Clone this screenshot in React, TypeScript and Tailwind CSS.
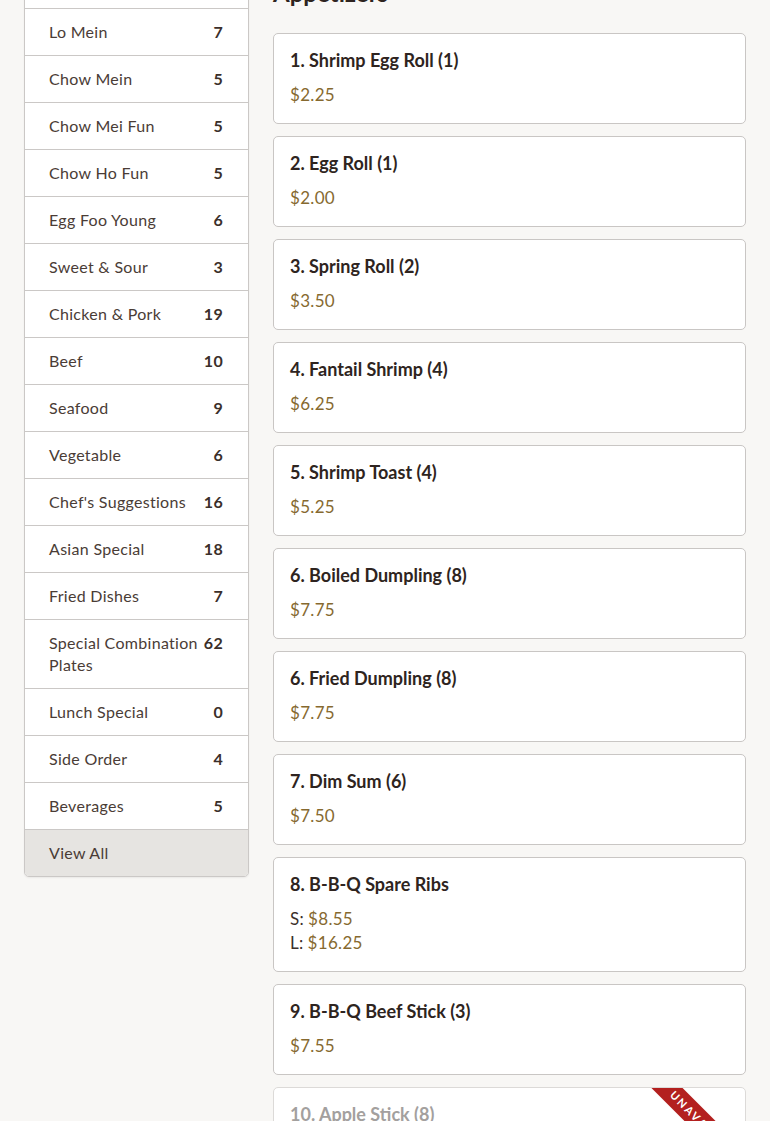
import React from "react";

const categories: [string, number][] = [
  ["Soup", 8],
  ["Fried Rice", 9],
  ["Lo Mein", 7],
  ["Chow Mein", 5],
  ["Chow Mei Fun", 5],
  ["Chow Ho Fun", 5],
  ["Egg Foo Young", 6],
  ["Sweet & Sour", 3],
  ["Chicken & Pork", 19],
  ["Beef", 10],
  ["Seafood", 9],
  ["Vegetable", 6],
  ["Chef's Suggestions", 16],
  ["Asian Special", 18],
  ["Fried Dishes", 7],
  ["Special Combination Plates", 62],
  ["Lunch Special", 0],
  ["Side Order", 4],
  ["Beverages", 5],
];

type Item = { name: string; prices: { label?: string; value: string }[]; unavailable?: boolean };

const items: Item[] = [
  { name: "1. Shrimp Egg Roll (1)", prices: [{ value: "$2.25" }] },
  { name: "2. Egg Roll (1)", prices: [{ value: "$2.00" }] },
  { name: "3. Spring Roll (2)", prices: [{ value: "$3.50" }] },
  { name: "4. Fantail Shrimp (4)", prices: [{ value: "$6.25" }] },
  { name: "5. Shrimp Toast (4)", prices: [{ value: "$5.25" }] },
  { name: "6. Boiled Dumpling (8)", prices: [{ value: "$7.75" }] },
  { name: "6. Fried Dumpling (8)", prices: [{ value: "$7.75" }] },
  { name: "7. Dim Sum (6)", prices: [{ value: "$7.50" }] },
  {
    name: "8. B-B-Q Spare Ribs",
    prices: [
      { label: "S:", value: "$8.55" },
      { label: "L:", value: "$16.25" },
    ],
  },
  { name: "9. B-B-Q Beef Stick (3)", prices: [{ value: "$7.55" }] },
  { name: "10. Apple Stick (8)", prices: [{ value: "$6.25" }], unavailable: true },
];

export default function App() {
  return (
    <div
      className="h-[1121px] overflow-hidden bg-[#f8f7f5] text-[#3b2f2a]"
      style={{ fontFamily: "Lato, 'Noto Sans', sans-serif" }}
    >
      <div className="flex items-start gap-6 px-6">
        <aside className="w-[225px] shrink-0 mt-[-86px] rounded-b-[5px] border border-[#cbc8c6] bg-white overflow-hidden shadow-[0_1px_2px_rgba(0,0,0,0.06)]">
          {categories.map(([name, count]) => (
            <div
              key={name}
              className="flex items-start justify-between gap-1 border-b border-[#cbc8c6] pl-6 pr-[25px] py-3 text-[16px] leading-[22px] tracking-[0.3px]"
            >
              <span className="text-[#4a3c36]">{name}</span>
              <span className="font-bold text-[#3b2f2a]">{count}</span>
            </div>
          ))}
          <div className="bg-[#e6e4e1] pl-6 py-3 text-[16px] leading-[22px] tracking-[0.3px] text-[#4a3c36]">View All</div>
        </aside>
        <main className="flex-1 mt-[-23px]">
          <h2 className="text-[24px] leading-[32px] font-bold text-[#2e2420] mb-6">Appetizers</h2>
          <div className="flex flex-col gap-3">
            {items.map((it) => (
              <div
                key={it.name}
                className={`relative overflow-hidden rounded-[5px] border bg-white pl-4 pr-4 pt-[13px] pb-[16px] ${
                  it.unavailable ? "border-[#dcdad8]" : "border-[#c9c6c4]"
                }`}
              >
                <div
                  className={`text-[18px] leading-[27px] font-bold ${
                    it.unavailable ? "text-[#a3a09e]" : "text-[#2e2420]"
                  }`}
                >
                  {it.name}
                </div>
                <div className="mt-[9px] flex flex-col">
                  {it.prices.map((p, i) => (
                    <div key={i} className="text-[17px] leading-[24px] tracking-[0.3px]">
                      {p.label && <span className="text-[#3b2f2a] mr-1">{p.label}</span>}
                      <span className={it.unavailable ? "text-[#b8a98a]" : "text-[#86692f]"}>{p.value}</span>
                    </div>
                  ))}
                </div>
                {it.unavailable && (
                  <div className="absolute top-[28px] right-[-61px] w-[200px] h-[22px] rotate-45 bg-[#b3201f] text-white text-[11px] font-bold tracking-[2px] flex items-center justify-center">
                    UNAVAILABLE
                  </div>
                )}
              </div>
            ))}
          </div>
        </main>
      </div>
    </div>
  );
}
